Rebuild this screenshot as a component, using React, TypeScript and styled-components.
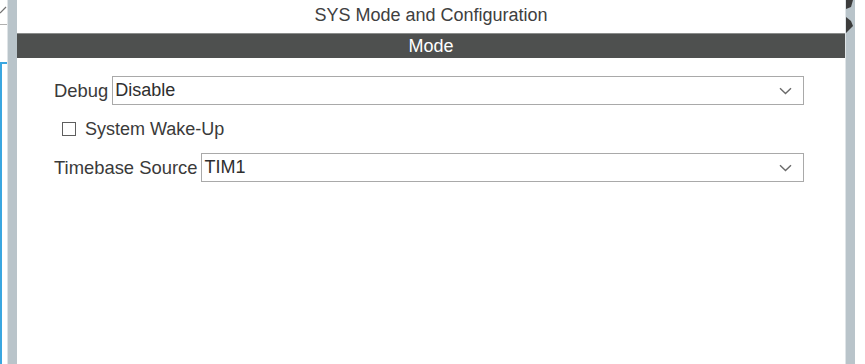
import React from "react";
import styled, { createGlobalStyle } from "styled-components";

const Global = createGlobalStyle`
  html, body { margin: 0; padding: 0; background: #ffffff; }
  body { font-family: "Liberation Sans", Arial, sans-serif; overflow: hidden; }
  #root { height: 364px; }
`;

const Page = styled.div`
  display: flex;
  height: 364px;
  width: 865px;
  background: #fff;
`;

const SideStrip = styled.div`
  width: 7px;
  display: flex;
  flex-direction: column;
  overflow: hidden;
`;

const StripTop = styled.div`
  height: 25px;
  border-bottom: 1px solid #b0b0b0;
  display: flex;
  align-items: flex-start;
  padding-top: 6px;
  box-sizing: border-box;
`;

const StripBox = styled.div`
  margin-top: 37px;
  flex: 1;
  border-top: 2px solid #3aa6e0;
  border-left: 2px solid #3aa6e0;
`;

const Gutter = styled.div`
  width: 10px;
  background: #b9c4ca;
  border-left: 1px solid #dfe4e7;
  box-sizing: border-box;
  position: relative;
`;

const ArrowMark = styled.svg`
  position: absolute;
  left: 0;
  top: 0;
`;

const RightPad = styled.div`
  width: 10px;
`;

const Panel = styled.div`
  flex: 1;
  display: flex;
  flex-direction: column;
`;

const Title = styled.div`
  height: 33px;
  display: flex;
  align-items: center;
  justify-content: center;
  font-size: 18px;
  color: #404040;
  padding-bottom: 3px;
  box-sizing: border-box;
`;

const ModeBar = styled.div`
  height: 25px;
  background: #4e504f;
  border-top: 1px solid #8a8c8b;
  box-sizing: border-box;
  display: flex;
  align-items: center;
  justify-content: center;
  color: #ffffff;
  font-size: 18px;
`;

const Form = styled.div`
  display: flex;
  flex-direction: column;
  padding: 18px 41px 0 37px;
`;

const Row = styled.div`
  display: flex;
  align-items: center;
  gap: 4px;
  height: 29px;
`;

const Label = styled.span`
  font-size: 18.4px;
  color: #3a3a3a;
  white-space: nowrap;
`;

const Select = styled.div`
  flex: 1;
  height: 29px;
  box-sizing: border-box;
  border: 1px solid #a9a9a9;
  display: flex;
  align-items: center;
  justify-content: space-between;
  padding: 0 11px 0 2px;
  font-size: 18px;
  color: #2e2e2e;
`;

const CheckRow = styled.label`
  display: flex;
  align-items: center;
  gap: 9px;
  height: 48px;
  padding-left: 8px;
  font-size: 18px;
  color: #3a3a3a;
`;

const Box = styled.span`
  width: 14px;
  height: 14px;
  box-sizing: border-box;
  border: 1px solid #5e5e5e;
  background: #fff;
`;

const Chevron = () => (
  <svg width="13" height="8" viewBox="0 0 13 8">
    <path d="M1 1.2 L6.5 6.5 L12 1.2" fill="none" stroke="#6a6a6a" strokeWidth="1.4" />
  </svg>
);

export default function App() {
  return (
    <>
      <Global />
      <Page>
        <SideStrip>
          <StripTop>
            <svg width="7" height="8" viewBox="0 0 7 8">
              <path d="M0 7 L6 1" stroke="#707070" strokeWidth="1.2" fill="none" />
            </svg>
          </StripTop>
          <StripBox />
        </SideStrip>
        <Gutter />
        <Panel>
          <Title>SYS Mode and Configuration</Title>
          <ModeBar>Mode</ModeBar>
          <Form>
            <Row>
              <Label>Debug</Label>
              <Select>
                <span>Disable</span>
                <Chevron />
              </Select>
            </Row>
            <CheckRow>
              <Box />
              System Wake-Up
            </CheckRow>
            <Row>
              <Label>Timebase Source</Label>
              <Select>
                <span>TIM1</span>
                <Chevron />
              </Select>
            </Row>
          </Form>
        </Panel>
        <Gutter>
          <ArrowMark width="9" height="34" viewBox="0 0 9 34">
            <path d="M0 0 L7 0 L5 7 L0 9 Z" fill="#3c3c3c" />
            <path d="M0 17 L5 21 L7 26 L0 33 Z" fill="#3c3c3c" />
          </ArrowMark>
        </Gutter>
        <RightPad />
      </Page>
    </>
  );
}
